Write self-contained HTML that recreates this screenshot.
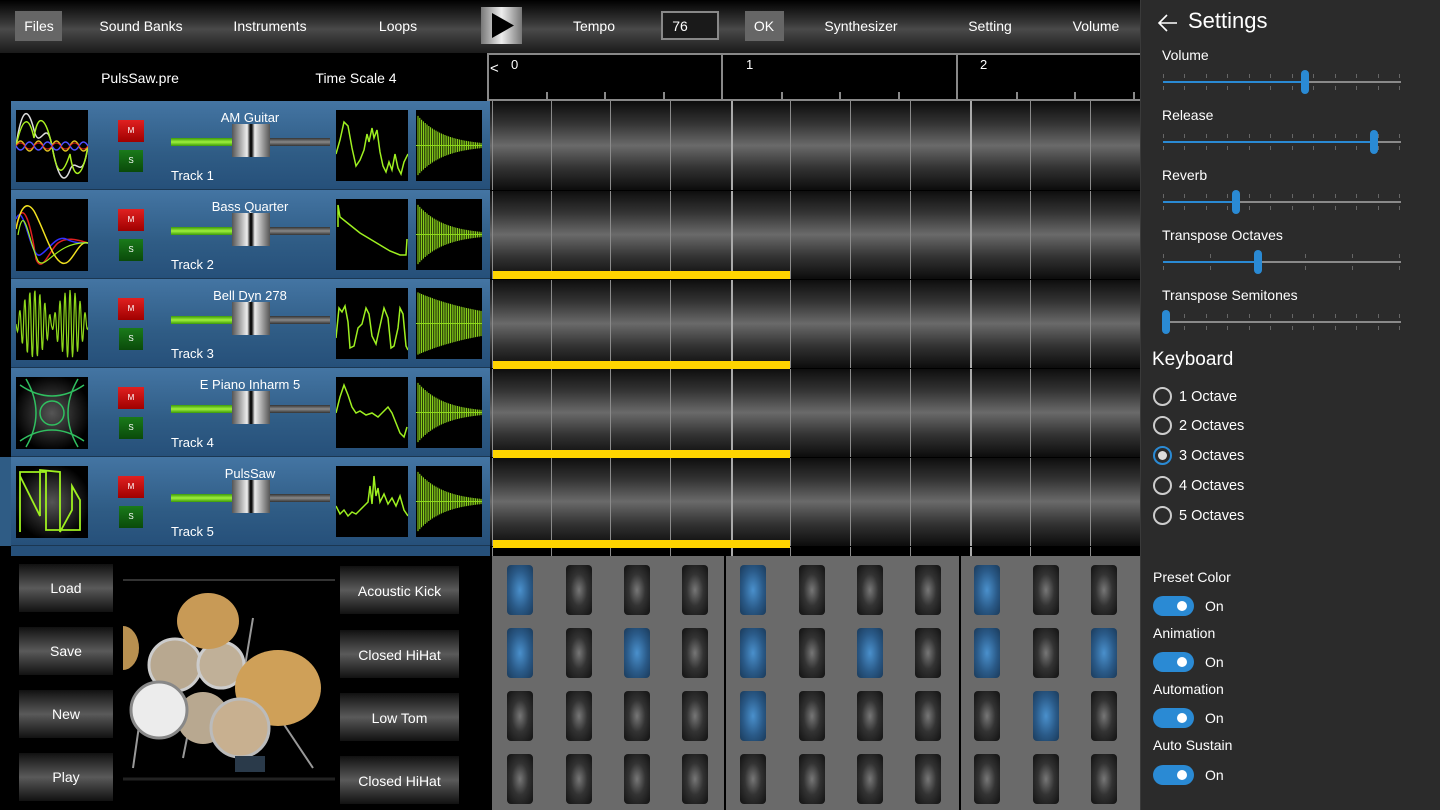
<!DOCTYPE html>
<html><head><meta charset="utf-8">
<style>
*{margin:0;padding:0;box-sizing:border-box}
body{width:1440px;height:810px;background:#000;position:relative;overflow:hidden;font-family:"Liberation Sans",sans-serif;color:#fff}
.a{position:absolute}
.top{left:0;top:0;width:1140px;height:53px;background:linear-gradient(#000 0%,#3a3a3a 45%,#4a4a4a 55%,#1a1a1a 100%)}
.tt{position:absolute;top:18px;font-size:14px;transform:translateX(-50%);white-space:nowrap}
.row{position:absolute;left:11px;width:479px;height:89px;background:linear-gradient(#4475a3,#2f5c85 60%,#26507a);border-bottom:1px solid #1b3752}
.ic{position:absolute;left:5px;top:9px;width:72px;height:72px;background:#000}
.m{position:absolute;left:107px;top:19px;width:26px;height:22px;background:linear-gradient(#e02020,#a00000);font-size:8px;text-align:center;line-height:22px}
.s{position:absolute;left:108px;top:49px;width:24px;height:22px;background:linear-gradient(#1a7a1a,#0a4a0a);font-size:8px;text-align:center;line-height:22px}
.nm{position:absolute;left:239px;top:9px;transform:translateX(-50%);font-size:13px;white-space:nowrap}
.tr{position:absolute;left:160px;top:67px;font-size:13px}
.gb{position:absolute;left:160px;top:37px;width:64px;height:8px;background:linear-gradient(#3c9a0a,#9ef03c,#3c9a0a)}
.yb{position:absolute;left:259px;top:37px;width:60px;height:8px;background:linear-gradient(#333,#888,#333)}
.th{position:absolute;left:221px;top:23px;width:38px;height:33px;background:linear-gradient(90deg,#555,#eee 40%,#111 48%,#111 52%,#eee 60%,#555)}
.wv{position:absolute;left:325px;top:9px;width:72px;height:71px;background:#000}
.en{position:absolute;left:405px;top:9px;width:66px;height:71px;background:#000}
.grow{position:absolute;left:490px;width:650px;height:89px;background:linear-gradient(#0c0c0c,#333 25%,#6a6a6a 50%,#333 75%,#0c0c0c)}
.vl{position:absolute;top:101px;height:455px;width:1px;background:#8a8a8a}
.ye{position:absolute;left:493px;width:297px;height:8px;background:#ffd400}
.pad{position:absolute;width:26px;height:50px;border-radius:4px;background:radial-gradient(ellipse at center,#777 0%,#333 45%,#111 100%)}
.pad.b{background:radial-gradient(ellipse at center,#4a90cc 0%,#2a5a88 55%,#1a3a5a 100%)}
.lb{position:absolute;left:19px;width:94px;height:48px;background:linear-gradient(#111,#5a5a5a 50%,#111);font-size:14px;text-align:center;line-height:48px}
.rb{position:absolute;left:340px;width:119px;height:48px;background:linear-gradient(#111,#5a5a5a 50%,#111);font-size:14px;text-align:center;line-height:50px}
.set{left:1140px;top:0;width:300px;height:810px;background:#2b2b2b;border-left:1px solid #3a3a3a}
.sl{position:absolute;left:21px;font-size:14px}
.trk{position:absolute;left:22px;width:238px;height:2px;background:#8a8a8a}
.fill{position:absolute;left:0;top:0;height:2px;background:#2a8ad4}
.tb{position:absolute;width:8px;height:24px;top:-11px;border-radius:4px;background:#2a8ad4}
.tk{position:absolute;width:1px;height:4px;background:#666}
.rd{position:absolute;left:12px;width:19px;height:19px;border-radius:50%;border:2px solid #ccc}
.rt{position:absolute;left:38px;font-size:14.5px}
.tg{position:absolute;left:12px;width:41px;height:20px;border-radius:10px;background:#2a8ad4}
.tg::after{content:"";position:absolute;right:7px;top:5px;width:10px;height:10px;border-radius:50%;background:#fff}
.on{position:absolute;left:64px;font-size:14px}
</style></head><body>

<div class="a top"></div>
<div class="a" style="left:15px;top:11px;width:47px;height:30px;background:#666"></div>
<div class="tt" style="left:39px">Files</div>
<div class="tt" style="left:141px">Sound Banks</div>
<div class="tt" style="left:270px">Instruments</div>
<div class="tt" style="left:398px">Loops</div>
<div class="a" style="left:481px;top:7px;width:41px;height:37px;background:linear-gradient(90deg,#777,#eee 50%,#777)"></div>
<svg class="a" style="left:481px;top:7px" width="41" height="37"><polygon points="11,6 11,31 33,18.5" fill="#000"/></svg>
<div class="tt" style="left:594px">Tempo</div>
<div class="a" style="left:661px;top:11px;width:58px;height:29px;border:2px solid #888;background:#1a1a1a"></div>
<div class="tt" style="left:680px">76</div>
<div class="a" style="left:745px;top:11px;width:39px;height:30px;background:#666"></div>
<div class="tt" style="left:764px">OK</div>
<div class="tt" style="left:861px">Synthesizer</div>
<div class="tt" style="left:990px">Setting</div>
<div class="tt" style="left:1096px">Volume</div>

<div class="tt" style="left:140px;top:70px">PulsSaw.pre</div>
<div class="tt" style="left:356px;top:70px">Time Scale 4</div>

<div class="a" style="left:487px;top:53px;width:660px;height:48px;border:2px solid #888;border-right:none;background:#000"></div>
<div class="a" style="left:721px;top:53px;width:2px;height:48px;background:#888"></div>
<div class="a" style="left:956px;top:53px;width:2px;height:48px;background:#888"></div>
<div class="a" style="left:490px;top:60px;font-size:15px">&lt;</div>
<div class="a" style="left:511px;top:57px;font-size:13px">0</div>
<div class="a" style="left:746px;top:57px;font-size:13px">1</div>
<div class="a" style="left:980px;top:57px;font-size:13px">2</div>
<div id="ticks"></div>

<div class="row" style="top:101px">
 <svg class="ic" viewBox="0 0 72 72"><path d="M0,36 C6,-4 12,-4 18,20 S30,4 36,36 S48,76 54,60 S66,76 72,36" stroke="#ddd" stroke-width="1.5" fill="none"/><path d="M0,36 C8,0 14,10 18,28 C22,0 30,8 36,36 C42,72 48,62 54,44 C58,72 66,70 72,36" stroke="#aaf020" stroke-width="1.5" fill="none"/><path d="M0,36 q4.5,-10 9,0 t9,0 t9,0 t9,0 t9,0 t9,0 t9,0 t9,0" stroke="#e0c020" stroke-width="1.5" fill="none"/><path d="M0,36 q4.5,8 9,0 t9,0 t9,0 t9,0 t9,0 t9,0 t9,0 t9,0" stroke="#5050ff" stroke-width="1.5" fill="none"/><path d="M0,36 q4.5,-6 9,0 t9,0 t9,0 t9,0 t9,0 t9,0 t9,0 t9,0" stroke="#e02020" stroke-width="1" fill="none"/></svg>
 <div class="m">M</div><div class="s">S</div><div class="nm">AM Guitar</div><div class="tr">Track 1</div>
 <div class="gb"></div><div class="yb"></div><div class="th"></div>
 <svg class="wv" viewBox="0 0 72 71"><polyline points="0,44 4,30 8,12 12,16 16,38 20,56 24,50 28,40 31,24 33,32 36,18 38,28 41,20 44,42 47,56 50,62 53,52 56,60 59,44 62,58 65,64 68,52 72,44" stroke="#9ef020" stroke-width="1.5" fill="none"/></svg>
 <svg class="en" viewBox="0 0 66 71" data-env="1"></svg>
</div>
<div class="row" style="top:190px">
 <svg class="ic" viewBox="0 0 72 72"><path d="M0,30 C6,-4 14,20 20,60 C26,76 34,50 42,44 C50,38 60,40 72,44" stroke="#e02020" stroke-width="1.5" fill="none"/><path d="M0,20 C8,0 14,60 24,56 C32,52 40,36 50,40 C58,44 64,44 72,44" stroke="#3030ff" stroke-width="1.5" fill="none"/><path d="M0,30 C4,10 10,0 18,12 C28,30 36,60 46,64 C56,68 62,40 72,44" stroke="#f0e020" stroke-width="1.5" fill="none"/><path d="M2,36 C8,0 12,40 22,62 C30,72 40,42 72,44" stroke="#9ef020" stroke-width="1.2" fill="none"/></svg>
 <div class="m">M</div><div class="s">S</div><div class="nm">Bass Quarter</div><div class="tr">Track 2</div>
 <div class="gb"></div><div class="yb"></div><div class="th"></div>
 <svg class="wv" viewBox="0 0 72 71"><polyline points="2,28 2,6 4,18 14,26 24,34 34,40 44,46 54,52 64,56 70,56 71,40" stroke="#9ef020" stroke-width="1.5" fill="none"/></svg>
 <svg class="en" viewBox="0 0 66 71" data-env="1"></svg>
</div>
<div class="row" style="top:279px">
 <svg class="ic" viewBox="0 0 72 72" data-bell="1"></svg>
 <div class="m">M</div><div class="s">S</div><div class="nm">Bell Dyn 278</div><div class="tr">Track 3</div>
 <div class="gb"></div><div class="yb"></div><div class="th"></div>
 <svg class="wv" viewBox="0 0 72 71"><polyline points="0,50 3,20 6,24 9,18 12,34 14,60 18,58 22,40 26,36 30,20 33,26 36,48 40,56 44,38 48,20 52,30 55,60 58,58 62,40 64,20 67,26 70,58 72,62" stroke="#9ef020" stroke-width="1.5" fill="none"/></svg>
 <svg class="en" viewBox="0 0 66 71" data-env="2"></svg>
</div>
<div class="row" style="top:368px">
 <svg class="ic" viewBox="0 0 72 72" style="background:radial-gradient(circle,#555,#000 75%)"><circle cx="36" cy="36" r="12" stroke="#30c060" stroke-width="1.5" fill="none"/><path d="M4,8 Q36,30 68,8 M4,64 Q36,42 68,64 M10,2 Q30,36 10,70 M62,2 Q42,36 62,70" stroke="#30c060" stroke-width="1.5" fill="none"/></svg>
 <div class="m">M</div><div class="s">S</div><div class="nm">E Piano Inharm 5</div><div class="tr">Track 4</div>
 <div class="gb"></div><div class="yb"></div><div class="th"></div>
 <svg class="wv" viewBox="0 0 72 71"><polyline points="0,36 4,20 8,8 12,18 16,30 20,36 24,34 30,38 36,36 42,40 48,34 52,30 56,36 60,46 64,56 68,60 71,50" stroke="#9ef020" stroke-width="1.5" fill="none"/></svg>
 <svg class="en" viewBox="0 0 66 71" data-env="1"></svg>
</div>
<div class="a" style="left:0;top:457px;width:11px;height:89px;background:#2f5c85"></div>
<div class="row" style="top:457px">
 <svg class="ic" viewBox="0 0 72 72" style="background:radial-gradient(circle,#555,#000 75%)"><polyline points="4,66 4,6 30,6 30,64 64,64 64,34 56,20 56,44 44,66 44,6 24,4 24,50 4,10" stroke="#9ef020" stroke-width="1.8" fill="none"/></svg>
 <div class="m">M</div><div class="s">S</div><div class="nm">PulsSaw</div><div class="tr">Track 5</div>
 <div class="gb"></div><div class="yb"></div><div class="th"></div>
 <svg class="wv" viewBox="0 0 72 71"><polyline points="0,40 4,48 8,44 12,50 16,46 20,48 24,44 28,40 32,36 34,20 36,38 38,10 40,30 42,22 44,36 48,28 52,38 56,32 60,40 64,30 68,44 72,50" stroke="#9ef020" stroke-width="1.5" fill="none"/></svg>
 <svg class="en" viewBox="0 0 66 71" data-env="1"></svg>
</div>
<div class="a" style="left:11px;top:546px;width:479px;height:10px;background:#26507a"></div>

<div class="grow" style="top:101px"></div>
<div class="grow" style="top:190px"></div>
<div class="grow" style="top:279px"></div>
<div class="grow" style="top:368px"></div>
<div class="grow" style="top:457px"></div>
<div id="vls"></div>
<div class="ye" style="top:271px"></div>
<div class="ye" style="top:361px"></div>
<div class="ye" style="top:450px"></div>
<div class="ye" style="top:540px"></div>

<div class="a" style="left:492px;top:556px;width:648px;height:254px;background:#6a6a6a"></div>
<div class="a" style="left:724px;top:556px;width:2px;height:254px;background:#000"></div>
<div class="a" style="left:959px;top:556px;width:2px;height:254px;background:#000"></div>
<div id="pads"></div>

<div class="lb" style="top:564px">Load</div>
<div class="lb" style="top:627px">Save</div>
<div class="lb" style="top:690px">New</div>
<div class="lb" style="top:753px">Play</div>
<div class="rb" style="top:566px">Acoustic Kick</div>
<div class="rb" style="top:630px">Closed HiHat</div>
<div class="rb" style="top:693px">Low Tom</div>
<div class="rb" style="top:756px">Closed HiHat</div>
<svg class="a" style="left:123px;top:578px" width="212" height="204">
 <rect width="212" height="204" fill="#000"/>
 <line x1="0" y1="2" x2="212" y2="2" stroke="#333" stroke-width="2"/>
 <line x1="0" y1="201" x2="212" y2="201" stroke="#222" stroke-width="3"/>
 <g stroke="#999" stroke-width="2"><line x1="20" y1="120" x2="10" y2="190"/><line x1="70" y1="130" x2="60" y2="180"/><line x1="140" y1="130" x2="120" y2="190"/><line x1="150" y1="130" x2="190" y2="190"/><line x1="130" y1="40" x2="120" y2="100"/></g>
 <ellipse cx="0" cy="70" rx="16" ry="22" fill="#b89050"/>
 <circle cx="52" cy="87" r="26" fill="#b8a890" stroke="#ccc" stroke-width="3"/>
 <circle cx="98" cy="87" r="23" fill="#c0b098" stroke="#ccc" stroke-width="3"/>
 <ellipse cx="85" cy="43" rx="31" ry="28" fill="#c89a56"/>
 <ellipse cx="155" cy="110" rx="43" ry="38" fill="#cfa058"/>
 <circle cx="80" cy="140" r="26" fill="#b8a890"/>
 <circle cx="117" cy="150" r="29" fill="#c8b090" stroke="#bbb" stroke-width="3"/>
 <circle cx="36" cy="132" r="28" fill="#ececec" stroke="#888" stroke-width="3"/>
 <rect x="112" y="178" width="30" height="16" fill="#2a3a4a"/>
</svg>

<div class="a set">
 <svg class="a" style="left:16px;top:13px" width="22" height="20"><path d="M20,10 H3 M10,2 L2,10 L10,18" stroke="#fff" stroke-width="1.6" fill="none"/></svg>
 <div class="a" style="left:47px;top:8px;font-size:22px">Settings</div>
 <div class="sl" style="top:47px">Volume</div>
 <div class="sl" style="top:107px">Release</div>
 <div class="sl" style="top:167px">Reverb</div>
 <div class="sl" style="top:227px">Transpose Octaves</div>
 <div class="sl" style="top:287px">Transpose Semitones</div>
 <div id="sliders"></div>
 <div class="a" style="left:11px;top:349px;font-size:19px">Keyboard</div>
 <div class="rd" style="top:387px"></div><div class="rt" style="top:389px">1 Octave</div>
 <div class="rd" style="top:416px"></div><div class="rt" style="top:418px">2 Octaves</div>
 <div class="rd" style="top:446px;border-color:#2a8ad4"><div style="position:absolute;left:3px;top:3px;width:9px;height:9px;border-radius:50%;background:#ddd"></div></div><div class="rt" style="top:448px">3 Octaves</div>
 <div class="rd" style="top:476px"></div><div class="rt" style="top:478px">4 Octaves</div>
 <div class="rd" style="top:506px"></div><div class="rt" style="top:508px">5 Octaves</div>
 <div class="sl" style="top:569px;left:12px">Preset Color</div>
 <div class="tg" style="top:596px"></div><div class="on" style="top:598px">On</div>
 <div class="sl" style="top:625px;left:12px">Animation</div>
 <div class="tg" style="top:652px"></div><div class="on" style="top:654px">On</div>
 <div class="sl" style="top:681px;left:12px">Automation</div>
 <div class="tg" style="top:708px"></div><div class="on" style="top:710px">On</div>
 <div class="sl" style="top:737px;left:12px">Auto Sustain</div>
 <div class="tg" style="top:765px"></div><div class="on" style="top:767px">On</div>
</div>

<script>
var h='';
[487,722,957].forEach(function(s){for(var k=1;k<4;k++){h+='<div class="a" style="left:'+(s+k*58.7)+'px;top:92px;width:2px;height:8px;background:#888"></div>';}});
document.getElementById('ticks').innerHTML=h;
h='';
var xs=[492,551,610,670,731,790,850,910,970,1030,1090];
xs.forEach(function(x,i){h+='<div class="vl" style="left:'+x+'px;'+((i==4||i==8)?'width:2px;background:#aaa':'')+'"></div>';});
[190,279,368,457,546].forEach(function(y){h+='<div class="a" style="left:490px;top:'+y+'px;width:650px;height:1px;background:#000"></div>';});
document.getElementById('vls').innerHTML=h;
h='';
var px=[507,566,624,682,740,799,857,915,974,1033,1091],py=[565,628,691,754];
var blue={'0,0':1,'0,4':1,'0,8':1,'1,0':1,'1,2':1,'1,4':1,'1,6':1,'1,8':1,'1,10':1,'2,4':1,'2,9':1};
py.forEach(function(y,r){px.forEach(function(x,c){h+='<div class="pad'+(blue[r+','+c]?' b':'')+'" style="left:'+x+'px;top:'+y+'px"></div>';});});
document.getElementById('pads').innerHTML=h;
h='';
var ys=[82,142,202,262,322],th=[142,211,73,95,3],nt=[12,12,12,6,12];
ys.forEach(function(y,i){
 h+='<div class="trk" style="top:'+(y-1)+'px"><div class="fill" style="width:'+th[i]+'px"></div>';
 for(var k=0;k<nt[i];k++){var x=k*(236/(nt[i]-1));h+='<div class="tk" style="left:'+x+'px;top:-7px"></div><div class="tk" style="left:'+x+'px;top:5px"></div>';}
 h+='<div class="tb" style="left:'+(th[i]-4)+'px"></div></div>';
});
document.getElementById('sliders').innerHTML=h;
document.querySelectorAll('svg[data-env]').forEach(function(s){
 var t=s.getAttribute('data-env'),p='';
 for(var x=2;x<66;x+=1.8){var a=t=='2'?(32*Math.exp(-(x)/70)):(32*Math.exp(-(x)/26));p+='M'+x+','+(35.5-a)+'V'+(35.5+a);}
 p+='M0,35.5H66';
 s.innerHTML='<path d="'+p+'" stroke="#8ed81c" stroke-width="1.1" fill="none"/>';
});
document.querySelectorAll('svg[data-bell]').forEach(function(s){
 var p='M0,36';
 for(var x=0;x<=72;x+=0.5){var env=Math.abs(Math.sin(x/72*Math.PI*2))*30+4;var v=36+env*Math.sin(x*1.25);p+=' L'+x+','+v.toFixed(1);}
 s.innerHTML='<path d="'+p+'" stroke="#8ed81c" stroke-width="1.2" fill="none"/>';
});
</script>
</body></html>
